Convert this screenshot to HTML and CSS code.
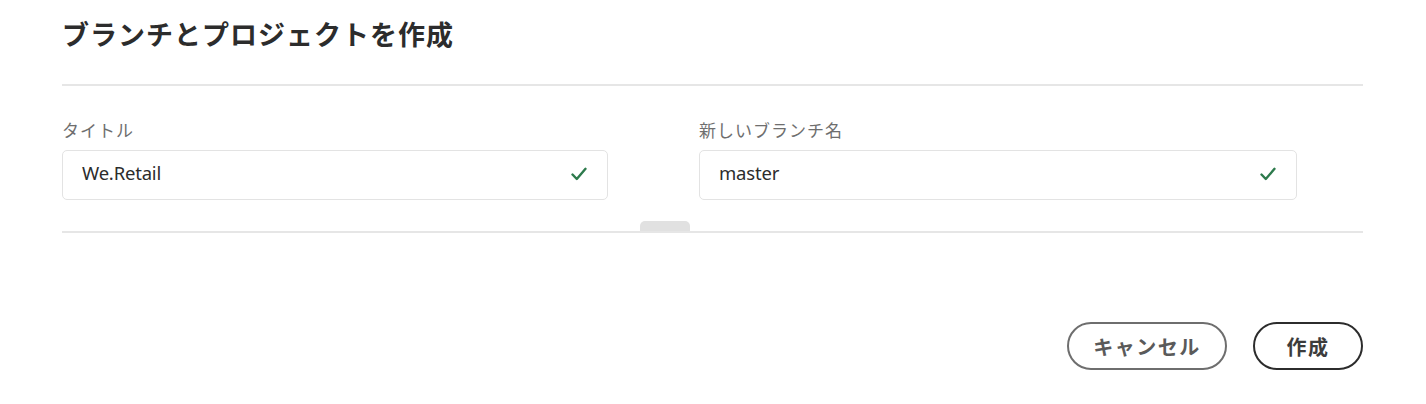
FILE: index.html
```html
<!DOCTYPE html>
<html lang="ja">
<head>
<meta charset="utf-8">
<title>ブランチとプロジェクトを作成</title>
<link rel="stylesheet" href="styles.css">
</head>
<body>
<div class="dialog">
  <header class="dialog-header">
    <h1 class="dialog-title">ブランチとプロジェクトを作成</h1>
  </header>
  <hr class="divider">
  <section class="fields">
    <div class="field field-title">
      <label class="field-label">タイトル</label>
      <div class="input">
        <span class="input-value">We.Retail</span>
        <svg class="check" width="16" height="14" viewBox="0 0 16 14"><path d="M1.5 7.5 L5.8 12 L14.5 1.8" fill="none" stroke="#2d7a4c" stroke-width="2.4" stroke-linecap="round" stroke-linejoin="round"/></svg>
      </div>
    </div>
    <div class="field field-branch">
      <label class="field-label">新しいブランチ名</label>
      <div class="input">
        <span class="input-value">master</span>
        <svg class="check" width="16" height="14" viewBox="0 0 16 14"><path d="M1.5 7.5 L5.8 12 L14.5 1.8" fill="none" stroke="#2d7a4c" stroke-width="2.4" stroke-linecap="round" stroke-linejoin="round"/></svg>
      </div>
    </div>
  </section>
  <div class="splitter">
    <span class="splitter-handle"></span>
  </div>
  <footer class="actions">
    <button class="btn btn-secondary">キャンセル</button>
    <button class="btn btn-primary">作成</button>
  </footer>
</div>
</body>
</html>
```

FILE: styles.css
```css
html, body {
  margin: 0;
  padding: 0;
  background: #ffffff;
}

body {
  font-family: "Noto Sans", "Noto Sans CJK JP", sans-serif;
  color: #2c2c2c;
}

.dialog {
  width: 1301px;
  padding: 0 62px 0 62px;
}

.dialog-header {
  padding-top: 16px;
}

.dialog-title {
  margin: 0;
  font-family: "Noto Sans CJK JP", sans-serif;
  font-size: 27px;
  line-height: 36px;
  font-weight: 600;
  letter-spacing: 1px;
  color: #2c2c2c;
}

.divider {
  margin: 32px 0 0 0;
  border: 0;
  height: 2px;
  background: #e6e6e6;
}

.fields {
  display: flex;
  padding-top: 32px;
}

.field {
  display: flex;
  flex-direction: column;
}

.field-title {
  width: 546px;
  margin-right: 91px;
}

.field-branch {
  width: 598px;
}

.field-label {
  font-family: "Noto Sans CJK JP", sans-serif;
  font-size: 17px;
  line-height: 24px;
  letter-spacing: 1px;
  color: #6e6e6e;
  font-weight: 400;
}

.input {
  margin-top: 8px;
  height: 50px;
  box-sizing: border-box;
  border: 1px solid #e3e3e3;
  border-radius: 5px;
  display: flex;
  align-items: center;
  justify-content: space-between;
  padding: 0 20px 0 19px;
}

.input-value {
  font-family: "Noto Sans", sans-serif;
  font-size: 18.5px;
  color: #2c2c2c;
  letter-spacing: -0.2px;
  margin-top: -5px;
}

.check {
  display: block;
  margin-top: -3px;
}

.splitter {
  margin-top: 20px;
  height: 11px;
  border-bottom: 2px solid #e6e6e6;
  display: flex;
  align-items: flex-end;
}

.splitter-handle {
  display: block;
  margin-left: 578px;
  width: 50px;
  height: 10px;
  background: #e1e1e1;
  border-radius: 5px 5px 0 0;
}

.actions {
  display: flex;
  justify-content: flex-end;
  gap: 26px;
  padding-top: 89px;
}

.btn {
  height: 48px;
  box-sizing: border-box;
  border-radius: 24px;
  background: #ffffff;
  font-family: "Noto Sans CJK JP", sans-serif;
  font-size: 20px;
  font-weight: 600;
  letter-spacing: 1.5px;
  display: flex;
  align-items: center;
  justify-content: center;
  padding: 0;
  cursor: pointer;
}

.btn-secondary {
  width: 160px;
  border: 2px solid #6e6e6e;
  color: #5a5a5a;
}

.btn-primary {
  width: 110px;
  border: 2px solid #2c2c2c;
  color: #3c3c3c;
}
```
